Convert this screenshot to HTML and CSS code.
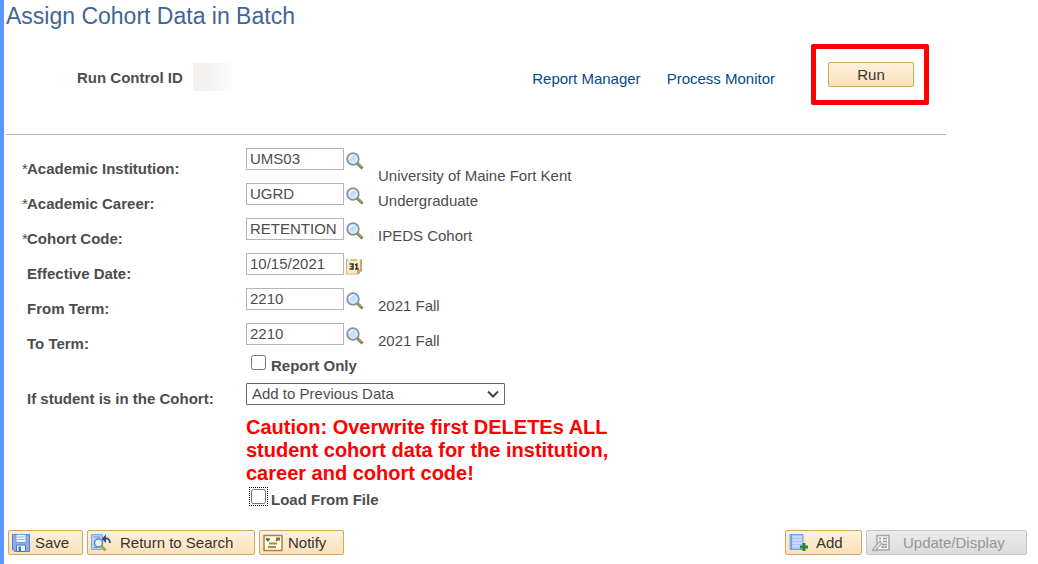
FILE: index.html
```html
<!DOCTYPE html>
<html lang="en">
<head>
    <meta charset="UTF-8">
    <meta name="viewport" content="width=device-width, initial-scale=1.0">
    <title>Assign Cohort Data in Batch</title>
    <link rel="stylesheet" href="styles.css">
</head>
<body>
    <!-- shared icons -->
    <svg class="sprite" aria-hidden="true">
        <radialGradient id="lens" cx="0.4" cy="0.4" r="0.7">
            <stop offset="0" stop-color="#b5d8fa"/>
            <stop offset="1" stop-color="#eaf5ff"/>
        </radialGradient>
        <symbol id="lookup" viewBox="0 0 18 18">
            <path d="M11 11l4.500 4.500" stroke="#85804a" stroke-width="3" stroke-linecap="square"/>
            <path d="M11.500 11l4 4" stroke="#bdb978" stroke-width="1"/>
            <circle cx="7" cy="7" r="5.800" fill="url(#lens)" stroke="#8d9299" stroke-width="1.800"/>
            <path d="M3.500 7a3.500 3.500 0 0 1 3.500-3.500" fill="none" stroke="#fff" stroke-width="1.200"/>
        </symbol>
    </svg>

    <h1 class="title">Assign Cohort Data in Batch</h1>

    <div class="run-bar">
        <span class="run-label">Run Control ID</span>
        <span class="run-id"></span>
        <nav class="links">
            <a href="#">Report Manager</a>
            <a href="#">Process Monitor</a>
        </nav>
        <div class="highlight">
            <button class="btn run">Run</button>
        </div>
    </div>

    <form id="cohort" class="fields">
        <div class="row tall">
            <label for="institution"><span class="req">*</span>Academic Institution:</label>
            <div class="control">
                <input class="text" type="text" id="institution" value="UMS03">
                <svg class="icon"><use href="#lookup"/></svg>
            </div>
            <span class="desc">University of Maine Fort Kent</span>
        </div>
        <div class="row">
            <label for="career"><span class="req">*</span>Academic Career:</label>
            <div class="control">
                <input class="text" type="text" id="career" value="UGRD">
                <svg class="icon"><use href="#lookup"/></svg>
            </div>
            <span class="desc">Undergraduate</span>
        </div>
        <div class="row">
            <label for="code"><span class="req">*</span>Cohort Code:</label>
            <div class="control">
                <input class="text" type="text" id="code" value="RETENTION">
                <svg class="icon"><use href="#lookup"/></svg>
            </div>
            <span class="desc">IPEDS Cohort</span>
        </div>
        <div class="row">
            <label for="effdt"><span class="req"></span>Effective Date:</label>
            <div class="control">
                <input class="text" type="text" id="effdt" value="10/15/2021">
                <svg class="icon" viewBox="0 0 18 18">
                    <path d="M.500 2.500h15v11l-3.500 3.500H.500z" fill="#f8edcb" stroke="#cdb27c"/>
                    <path d="M1 3h14" stroke="#d9bd86" stroke-width="2"/>
                    <path d="M15 4v9.500L11.500 17" fill="none" stroke="#b8965a" stroke-width="1.500"/>
                    <path d="M11 17v-4h4.500z" fill="#c9a762"/>
                    <path d="M3.500 0v4M12.500 0v4" stroke="#fff" stroke-width="2"/>
                    <path d="M3.500 7h3.500v5H3.500M4.500 9.500H7" fill="none" stroke="#333" stroke-width="1.500"/>
                    <path d="M9 8l1.800-.800V12M9 12h4" fill="none" stroke="#333" stroke-width="1.500"/>
                </svg>
            </div>
        </div>
        <div class="row">
            <label for="from"><span class="req"></span>From Term:</label>
            <div class="control">
                <input class="text" type="text" id="from" value="2210">
                <svg class="icon"><use href="#lookup"/></svg>
            </div>
            <span class="desc">2021 Fall</span>
        </div>
        <div class="row">
            <label for="to"><span class="req"></span>To Term:</label>
            <div class="control">
                <input class="text" type="text" id="to" value="2210">
                <svg class="icon"><use href="#lookup"/></svg>
            </div>
            <span class="desc">2021 Fall</span>
        </div>
        <div class="check-row">
            <input class="check" type="checkbox" id="reportOnly">
            <label for="reportOnly">Report Only</label>
        </div>
        <div class="row action">
            <label for="inCohort"><span class="req"></span>If student is in the Cohort:</label>
            <div class="select">
                <select id="inCohort">
                    <option>Add to Previous Data</option>
                </select>
                <svg class="chevron" viewBox="0 0 12 8"><path d="M1 1.500l5 5 5-5" fill="none" stroke="#444" stroke-width="2"/></svg>
            </div>
        </div>
        <p class="caution">Caution: Overwrite first DELETEs ALL student cohort data for the institution, career and cohort code!</p>
        <div class="check-row">
            <input class="check focused" type="checkbox" id="loadFile">
            <label for="loadFile">Load From File</label>
        </div>
    </form>

    <div class="toolbar">
        <button class="btn save">
            <svg class="icon" viewBox="0 0 18 18">
                <path d="M.500.500h17v17h-15l-2-2z" fill="#86aeee" stroke="#587fc6"/>
                <path d="M4 .500h10v8H4z" fill="#eef5ff" stroke="#7399d8"/>
                <path d="M5.500 3h7M5.500 5.500h7" stroke="#93b3e6"/>
                <path d="M4.500 11h9v6.500h-9z" fill="#e6effd" stroke="#4c74bc"/>
                <path d="M6.500 12.500H9v5H6.500z" fill="#4a72b8"/>
            </svg>
            Save
        </button>
        <button class="btn return">
            <svg class="icon wide" viewBox="0 0 20 18">
                <path d="M.500.500h11v15H.500z" fill="#b5d1fa" stroke="#81a9e5"/>
                <path d="M2.500 3h7M2.500 13.500h4" stroke="#6e9ce0"/>
                <path d="M10.500 12l4 4.500" stroke="#b9a83a" stroke-width="3"/>
                <circle cx="7.500" cy="9" r="4" fill="#e5f2ff" stroke="#6d86a8" stroke-width="1.500"/>
                <path d="M14 4.500c3-.500 5 1.500 5 4.500" fill="none" stroke="#334c82" stroke-width="1.800"/>
                <path d="M15 .500v8.500l-4.500-4.200z" fill="#334c82"/>
            </svg>
            Return to Search
        </button>
        <button class="btn notify">
            <svg class="icon wide" viewBox="0 0 20 18">
                <path d="M1 1.500h18v15H1z" fill="#fffbe0" stroke="#a88350" stroke-width="1.500"/>
                <path d="M3 4.500l3 2M6.500 4.500L4 7" stroke="#39733b" stroke-width="1.800"/>
                <path d="M13 3.500h4v3h-4z" fill="#459346"/>
                <path d="M13 7l2-1.500" stroke="#bd5037" stroke-width="1.500"/>
                <path d="M6 9.500h8M5 13h8" stroke="#a38748" stroke-width="2"/>
            </svg>
            Notify
        </button>
        <button class="btn add">
            <svg class="icon wide" viewBox="0 0 20 18">
                <path d="M1 .500h13v15H1z" fill="#a9c6f8" stroke="#789ee0"/>
                <path d="M3.500 3h9.500M3.500 6h9.500M3.500 9h9.500M3.500 12h7" stroke="#e7f0ff"/>
                <path d="M2.500 1v15" stroke="#6d96df"/>
                <path d="M15 9v8M11 13h8" stroke="#27882c" stroke-width="3"/>
            </svg>
            Add
        </button>
        <button class="btn update" disabled>
            <svg class="icon wide" viewBox="0 0 20 18">
                <path d="M6 1.500h12v14.500H6z" fill="#f3f3f3" stroke="#a5a5a5" stroke-width="1.500"/>
                <path d="M8 4.500h2M12 4.500h4M8 7.500h2M12 7.500h4M11 10.500h5M10 13h6" stroke="#999" stroke-width="1.500"/>
                <path d="M1.500 15.500l7-8 2.500 2-7 7z" fill="#ddd" stroke="#999"/>
                <path d="M1 16.500h6" stroke="#aaa" stroke-width="1.500"/>
            </svg>
            Update/Display
        </button>
    </div>
</body>
</html>
```
FILE: styles.css
```css
* { box-sizing: border-box; }
html { min-height: 100%; border-left: 4px solid #5b96fb; background-color: white; }
body { margin: 0; padding: 0 11px 8px 2px; color: #4d4d4d; font-family: "Liberation Sans", Arial, sans-serif; font-size: 15px; line-height: 18px; }
input, button, select { font: inherit; color: inherit; margin: 0; }
a { color: #004b91; text-decoration: none; }
label { font-weight: bold; }
.sprite { position: absolute; width: 0; height: 0; }
.title { margin: 0; color: #426596; font-size: 23px; font-weight: normal; line-height: 32px; }

.run-bar { display: flex; align-items: flex-start; max-width: 940px; padding: 12px 17px 29px 71px; border-bottom: 1px solid #b5b5b5; }
.run-label { margin-top: 25px; font-weight: bold; }
.run-id { width: 38px; height: 28px; margin: 19px 0 0 10px; background: linear-gradient(90deg, #f4f0ed, #f3f3f3 50%, #fcfcfc); }
.links { display: flex; gap: 26px; margin: 26px 36px 0 auto; }
.highlight { padding: 13px 10px 13px 12px; border: 5px solid #ff0000; border-radius: 2px; }

.btn { display: flex; align-items: center; gap: 5px; height: 25px; padding: 0 3px; border: 1px solid #d9a45c; border-radius: 2px; background: linear-gradient(#fdf1dc, #f9e2b8); color: #333; white-space: nowrap; }
.run { justify-content: center; width: 86px; }

.icon { flex: none; width: 18px; height: 18px; }
.wide { width: 20px; }

.fields { padding-top: 13px; }
.row { display: grid; grid-template-columns: 224px 132px 1fr; align-items: start; height: 35px; padding-left: 16px; }
.row label { padding-top: 12px; }
.req { display: inline-block; width: 5px; font-weight: normal; }
.control { display: flex; align-items: center; gap: 2px; }
.text { width: 98px; height: 22px; padding: 0 3px 1px; border: 1px solid #b5b5b5; background-color: white; }
.control .icon { margin-top: 3px; }
.desc { padding-top: 9px; }
.tall .desc { padding-top: 19px; }
.check-row { display: flex; align-items: flex-start; gap: 5px; padding-left: 245px; }
.row + .check-row { margin-top: -3px; }
.check-row label { margin-top: 2px; }
.check { width: 15px; height: 15px; }
.focused { outline: 1px dotted #000; outline-offset: 1px; }
.action { grid-template-columns: 224px 259px; height: 33px; margin-top: 8px; }
.action label { padding-top: 7px; }
.select { display: grid; align-items: center; }
.select select { grid-area: 1 / 1; width: 100%; height: 22px; padding: 0 5px; border: 1px solid #666; border-radius: 1px; background-color: white; appearance: none; }
.chevron { grid-area: 1 / 1; justify-self: end; width: 12px; height: 8px; margin-right: 6px; pointer-events: none; }
.caution { max-width: 620px; margin: 0 0 4px; padding-left: 240px; color: #ff0000; font-size: 20px; font-weight: bold; line-height: 23px; }

.toolbar { display: flex; gap: 4px; margin-top: 21px; padding-left: 2px; }
.save { width: 75px; }
.return { width: 168px; gap: 9px; }
.notify { width: 85px; }
.add { width: 77px; gap: 7px; margin-left: auto; }
.update { width: 161px; gap: 12px; padding: 0 4px; border-color: #c6c6c6; background: linear-gradient(#ececec, #dcdcdc); color: #979797; }
```
